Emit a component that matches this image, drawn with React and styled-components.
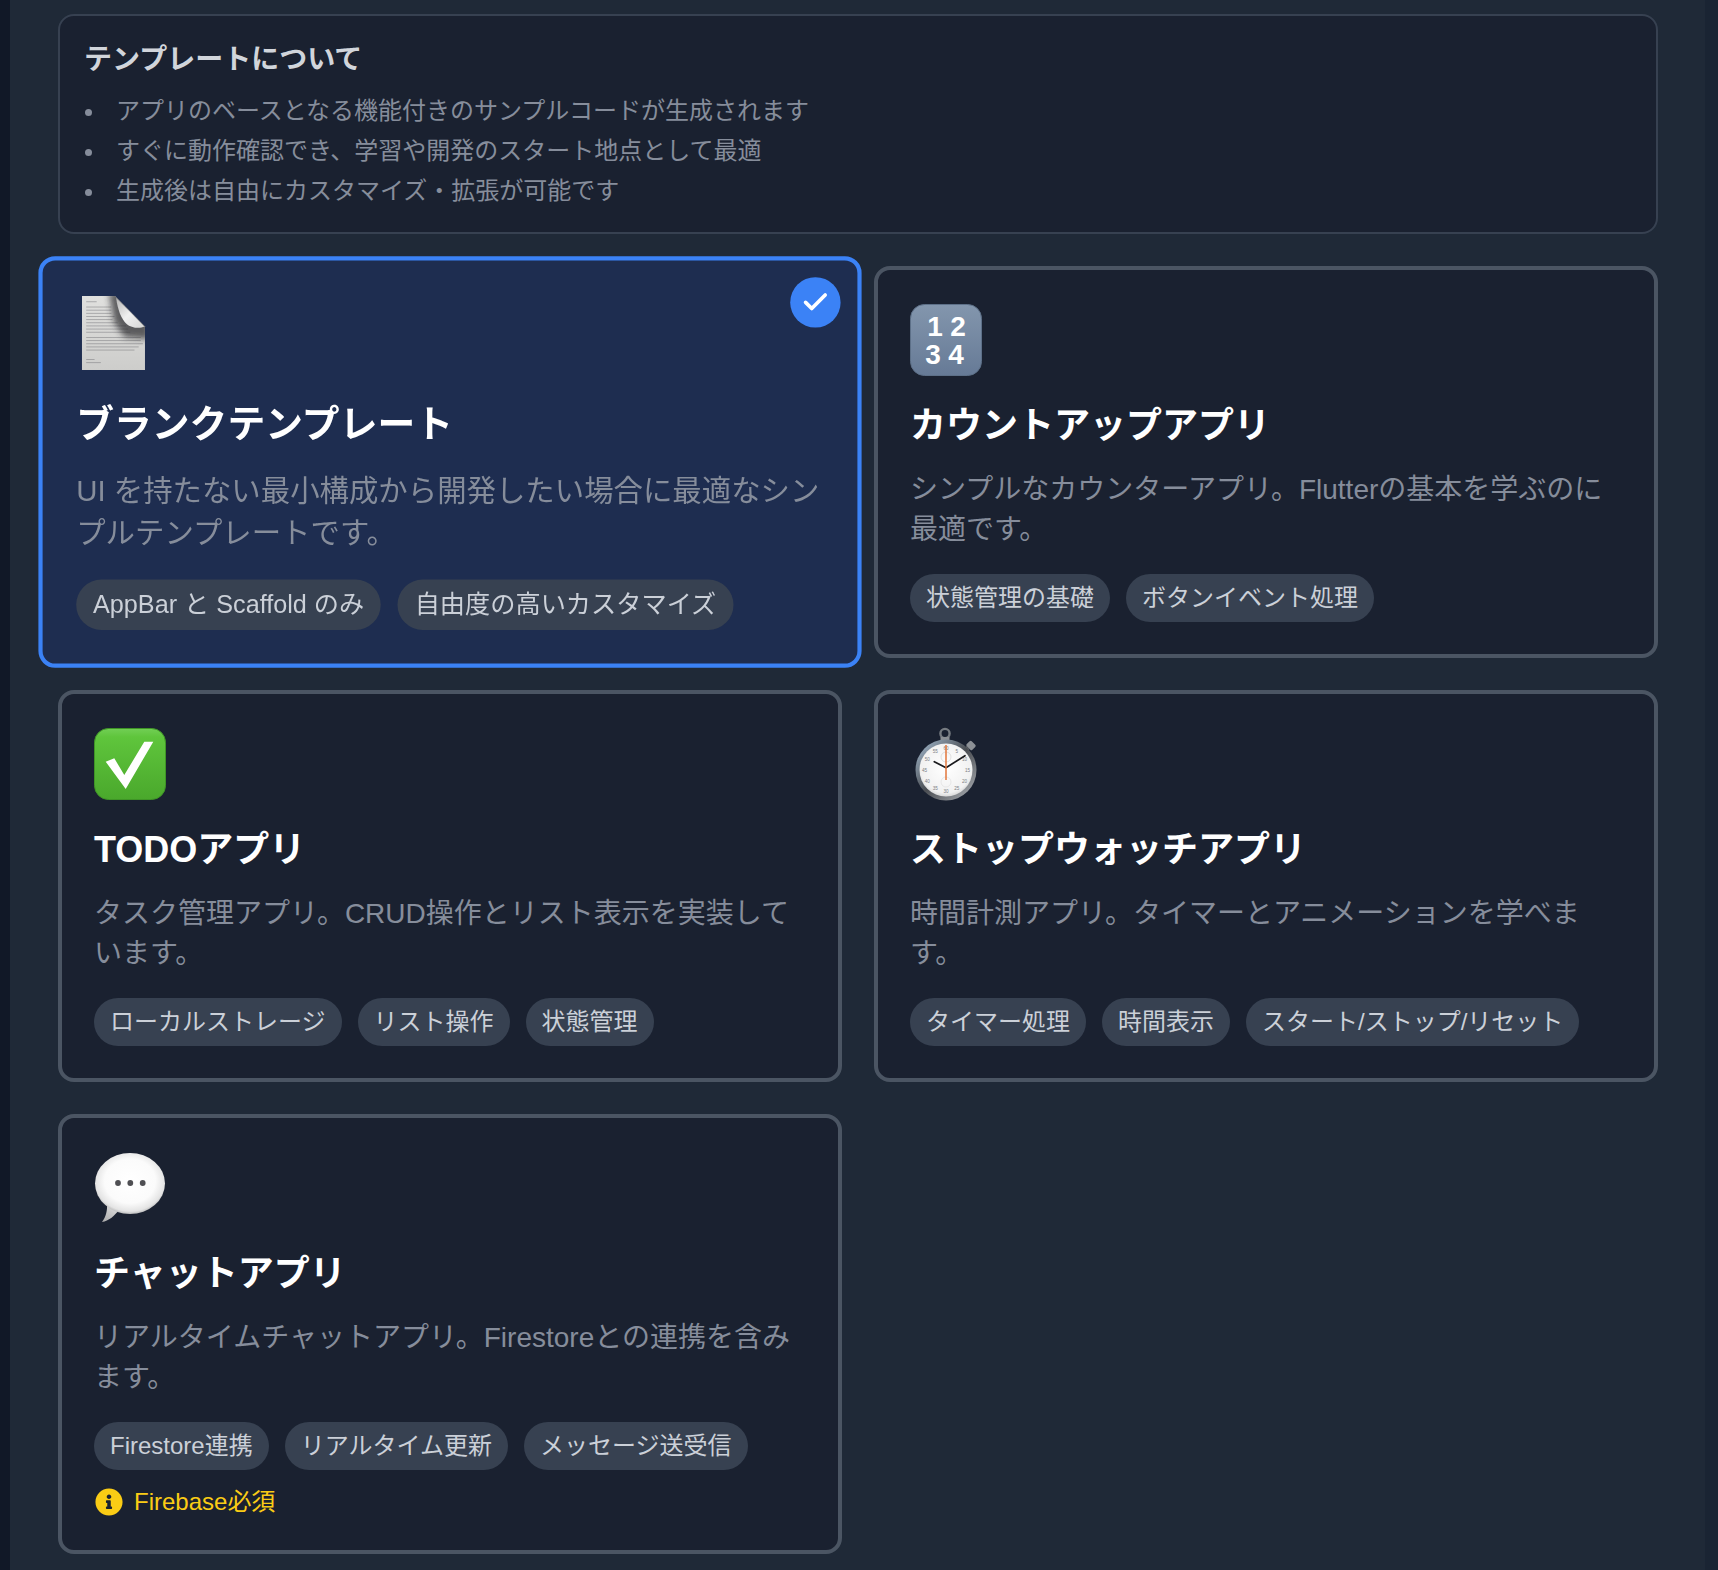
import React from "react";
import styled, { createGlobalStyle } from "styled-components";
import { Check } from "lucide-react";
import { FaInfoCircle } from "react-icons/fa";

const GlobalStyle = createGlobalStyle`
  html, body {
    margin: 0;
    padding: 0;
    background: #111827;
  }
  * {
    box-sizing: border-box;
  }
`;

const DocIcon = () => {
  const lines = [
    [5, 10], [10, 24], [13, 24], [16, 24], [19, 27], [22, 25], [25, 30], [28, 38], [31, 40], [34, 42],
    [39, 52], [42, 52], [45, 54], [48, 50], [51, 46], [60, 8], [63, 14],
  ];
  return (
    <Art viewBox="0 0 72 72">
      <defs>
        <linearGradient id="docSheet" x1="0" y1="0" x2="0" y2="1">
          <stop offset="0" stopColor="#e0e0de" />
          <stop offset="1" stopColor="#cdcdcb" />
        </linearGradient>
        <linearGradient id="docFold" x1="0" y1="0" x2="1" y2="1">
          <stop offset="0" stopColor="#b4b4b4" />
          <stop offset="0.5" stopColor="#f0f0f0" />
          <stop offset="1" stopColor="#d4d4d4" />
        </linearGradient>
        <filter id="docBlur" x="-50%" y="-50%" width="200%" height="200%">
          <feGaussianBlur stdDeviation="3" />
        </filter>
        <clipPath id="docClip">
          <path d="M5.5 0H37L65.5 29V70.4H5.5Z" />
        </clipPath>
      </defs>
      <path d="M5.5 0H37L65.5 29V70.4H5.5Z" fill="url(#docSheet)" />
      {lines.map(([y, w]) => (
        <rect key={y} x="9.5" y={y} width={w} height="0.8" fill="#707075" opacity="0.55" />
      ))}
      <g clipPath="url(#docClip)">
        <path d="M31 -4H42L52 16L70 24V41L46 39L36 25Z" fill="#2a2a2e" opacity="0.72" filter="url(#docBlur)" />
      </g>
      <path d="M38 1.5L65 29C60 31.5 52 30 48 26.5C43 22 39.5 13 38 1.5Z" fill="url(#docFold)" />
    </Art>
  );
};

const NumbersIcon = () => (
  <Art viewBox="0 0 72 72">
    <defs>
      <linearGradient id="numTile" x1="0" y1="0" x2="0" y2="1">
        <stop offset="0" stopColor="#8396ad" />
        <stop offset="1" stopColor="#667a96" />
      </linearGradient>
    </defs>
    <rect x="0.5" y="0.5" width="71" height="71" rx="14" fill="url(#numTile)" stroke="#5d7088" />
    <TileDigits x="25" y="31.5">1</TileDigits>
    <TileDigits x="48" y="31.5">2</TileDigits>
    <TileDigits x="23" y="59.5">3</TileDigits>
    <TileDigits x="46" y="59.5">4</TileDigits>
  </Art>
);

const CheckIcon = () => (
  <Art viewBox="0 0 72 72">
    <defs>
      <linearGradient id="checkTile" x1="0" y1="0" x2="0" y2="1">
        <stop offset="0" stopColor="#72cf55" />
        <stop offset="0.12" stopColor="#5fc53c" />
        <stop offset="1" stopColor="#4aa82c" />
      </linearGradient>
    </defs>
    <rect x="0.5" y="0.5" width="71" height="71" rx="14" fill="url(#checkTile)" stroke="#3f9526" />
    <path d="M11.7 33.7L20.3 30.3L30.3 47L50.3 13.7H59.3L31.7 61Z" fill="#fff" />
  </Art>
);

const WatchIcon = () => {
  const numbers = [60, 5, 10, 15, 20, 25, 30, 35, 40, 45, 50, 55];
  return (
    <Art viewBox="0 0 72 72">
      <defs>
        <linearGradient id="watchRing" x1="0" y1="0" x2="1" y2="1">
          <stop offset="0" stopColor="#a8c0d6" />
          <stop offset="0.5" stopColor="#4a4d52" />
          <stop offset="1" stopColor="#b4b8bd" />
        </linearGradient>
        <radialGradient id="watchFace" cx="0.5" cy="0.45" r="0.6">
          <stop offset="0" stopColor="#ffffff" />
          <stop offset="0.8" stopColor="#f1f1f1" />
          <stop offset="1" stopColor="#c8c8c8" />
        </radialGradient>
      </defs>
      <circle cx="35" cy="5.5" r="4.6" fill="none" stroke="#767b81" strokeWidth="2.4" />
      <rect x="30.5" y="9" width="9" height="4.5" fill="#8b8f94" />
      <rect x="57" y="14" width="8" height="7" rx="1.5" fill="#8d9196" transform="rotate(45 61 17.5)" />
      <rect x="53.5" y="19" width="4.5" height="6" fill="#5f6368" transform="rotate(45 56 22)" />
      <circle cx="36" cy="42" r="30.5" fill="url(#watchRing)" />
      <circle cx="36" cy="42" r="26.5" fill="url(#watchFace)" />
      {numbers.map((n, i) => {
        const a = (i * 30 * Math.PI) / 180;
        return (
          <WatchNumber key={n} x={36 + Math.sin(a) * 21.5} y={43.8 - Math.cos(a) * 21.5}>
            {n}
          </WatchNumber>
        );
      })}
      <circle cx="36" cy="29" r="5" fill="none" stroke="#d4d4d4" strokeWidth="0.7" />
      <circle cx="36" cy="54" r="5" fill="none" stroke="#e0e0e0" strokeWidth="0.7" />
      <path d="M55 27.7L36 39.7L24.3 33.7" fill="none" stroke="#1b1b1e" strokeWidth="1.7" strokeLinecap="round" strokeLinejoin="round" />
      <path d="M36 17V52" stroke="#e2763b" strokeWidth="1.5" />
    </Art>
  );
};

const BubbleIcon = () => (
  <Art viewBox="0 0 72 72">
    <defs>
      <radialGradient id="bubbleFill" cx="0.5" cy="0.46" r="0.55">
        <stop offset="0" stopColor="#ffffff" />
        <stop offset="0.66" stopColor="#fbfbfb" />
        <stop offset="0.9" stopColor="#e4e4e4" />
        <stop offset="1" stopColor="#b4b4b4" />
      </radialGradient>
      <linearGradient id="bubbleTail" x1="0" y1="1" x2="0.6" y2="0">
        <stop offset="0" stopColor="#a8a8a8" />
        <stop offset="1" stopColor="#dcdcdc" />
      </linearGradient>
    </defs>
    <path d="M8 70C12 65 13.5 58 13 52L25 58C20 64 15 69 8 70Z" fill="url(#bubbleTail)" />
    <ellipse cx="36" cy="31.5" rx="35" ry="30.5" fill="url(#bubbleFill)" />
    <circle cx="24" cy="31" r="2.9" fill="#4f4f53" />
    <circle cx="36.3" cy="31" r="2.9" fill="#4f4f53" />
    <circle cx="48.7" cy="31" r="2.9" fill="#4f4f53" />
  </Art>
);

const templates = [
  {
    title: "ブランクテンプレート",
    desc: "UI を持たない最小構成から開発したい場合に最適なシンプルテンプレートです。",
    tags: ["AppBar と Scaffold のみ", "自由度の高いカスタマイズ"],
    Icon: DocIcon,
    selected: true,
  },
  {
    title: "カウントアップアプリ",
    desc: "シンプルなカウンターアプリ。Flutterの基本を学ぶのに最適です。",
    tags: ["状態管理の基礎", "ボタンイベント処理"],
    Icon: NumbersIcon,
  },
  {
    title: "TODOアプリ",
    desc: "タスク管理アプリ。CRUD操作とリスト表示を実装しています。",
    tags: ["ローカルストレージ", "リスト操作", "状態管理"],
    Icon: CheckIcon,
  },
  {
    title: "ストップウォッチアプリ",
    desc: "時間計測アプリ。タイマーとアニメーションを学べます。",
    tags: ["タイマー処理", "時間表示", "スタート/ストップ/リセット"],
    Icon: WatchIcon,
  },
  {
    title: "チャットアプリ",
    desc: "リアルタイムチャットアプリ。Firestoreとの連携を含みます。",
    tags: ["Firestore連携", "リアルタイム更新", "メッセージ送受信"],
    Icon: BubbleIcon,
    warning: "Firebase必須",
  },
];

function App() {
  return (
    <Page>
      <GlobalStyle />
      <Panel>
        <InfoBox>
          <InfoTitle>テンプレートについて</InfoTitle>
          <InfoList>
            <li>アプリのベースとなる機能付きのサンプルコードが生成されます</li>
            <li>すぐに動作確認でき、学習や開発のスタート地点として最適</li>
            <li>生成後は自由にカスタマイズ・拡張が可能です</li>
          </InfoList>
        </InfoBox>
        <Grid>
          {templates.map(({ title, desc, tags, Icon, selected, warning }) => (
            <Card key={title} $selected={selected}>
              {selected && (
                <Badge>
                  <Check size={28} strokeWidth={3} color="#fff" />
                </Badge>
              )}
              <IconSlot>
                <Icon />
              </IconSlot>
              <CardTitle>{title}</CardTitle>
              <CardDesc>{desc}</CardDesc>
              <TagRow>
                {tags.map((tag) => (
                  <Tag key={tag}>{tag}</Tag>
                ))}
              </TagRow>
              {warning && (
                <Warning>
                  <FaInfoCircle size={28} />
                  {warning}
                </Warning>
              )}
            </Card>
          ))}
        </Grid>
      </Panel>
    </Page>
  );
}

export default App;

const Page = styled.div`
  display: flex;
  width: 1718px;
  height: 1570px;
  overflow: hidden;
  padding-left: 10px;
  background: #111827;
  font-family: "Liberation Sans", "Noto Sans CJK JP", sans-serif;
`;

const Panel = styled.main`
  width: 1695px;
  height: 100%;
  padding: 14px 47px 0 48px;
  background: #1f2937;
  box-shadow: 13px 0 0 #1a2433;
`;

const InfoBox = styled.section`
  height: 220px;
  padding: 24px 24px 0;
  border: 2px solid #374151;
  border-radius: 16px;
  background: #1a2130;
  margin-bottom: 32px;
`;

const InfoTitle = styled.h3`
  margin: 0 0 11px;
  font-size: 28px;
  line-height: 40px;
  font-weight: 700;
  color: #d1d5db;
`;

const InfoList = styled.ul`
  margin: 0;
  padding: 0 0 0 32px;
  list-style: none;
  font-size: 24px;
  line-height: 40px;
  color: #868d9b;

  li {
    position: relative;
  }

  li::before {
    content: "";
    position: absolute;
    left: -31px;
    top: 18px;
    width: 7px;
    height: 7px;
    border-radius: 50%;
    background: #868d9b;
  }
`;

const Grid = styled.div`
  display: grid;
  grid-template-columns: repeat(2, 1fr);
  align-items: start;
  gap: 32px;
`;

const Card = styled.article`
  position: relative;
  padding: 32px;
  border: 4px solid ${(props) => (props.$selected ? "#3b82f6" : "#4b5563")};
  border-radius: 16px;
  background: ${(props) => (props.$selected ? "#1e2d50" : "#1a2130")};
  transform: ${(props) => (props.$selected ? "scale(1.05)" : "none")};
  z-index: ${(props) => (props.$selected ? 1 : 0)};
`;

const Badge = styled.div`
  position: absolute;
  top: 16px;
  right: 16px;
  width: 48px;
  height: 48px;
  display: flex;
  align-items: center;
  justify-content: center;
  border-radius: 50%;
  background: #3b82f6;
`;

const IconSlot = styled.div`
  height: 80px;
  margin-bottom: 16px;
  padding-top: 2px;
`;

const Art = styled.svg`
  display: block;
  width: 72px;
  height: 72px;
  overflow: visible;
`;

const TileDigits = styled.text`
  font-family: "Liberation Sans", sans-serif;
  font-size: 28px;
  font-weight: 700;
  fill: #fff;
  text-anchor: middle;
`;

const WatchNumber = styled.text`
  font-family: "Liberation Sans", sans-serif;
  font-size: 4.6px;
  fill: #7b7e84;
  text-anchor: middle;
`;

const CardTitle = styled.h2`
  margin: 0 0 16px;
  font-size: 36px;
  line-height: 56px;
  font-weight: 700;
  color: #fff;
`;

const CardDesc = styled.p`
  margin: 0 0 24px;
  font-size: 28px;
  line-height: 40px;
  color: #868d9b;
`;

const TagRow = styled.div`
  display: flex;
  flex-wrap: wrap;
  gap: 16px;
`;

const Tag = styled.span`
  height: 48px;
  padding: 0 16px;
  border-radius: 24px;
  background: #374151;
  font-size: 24px;
  line-height: 48px;
  color: #cbd0d8;
`;

const Warning = styled.div`
  display: flex;
  align-items: center;
  gap: 11px;
  height: 32px;
  margin-top: 16px;
  padding-left: 1px;
  font-size: 24px;
  line-height: 32px;
  color: #facc15;
`;
